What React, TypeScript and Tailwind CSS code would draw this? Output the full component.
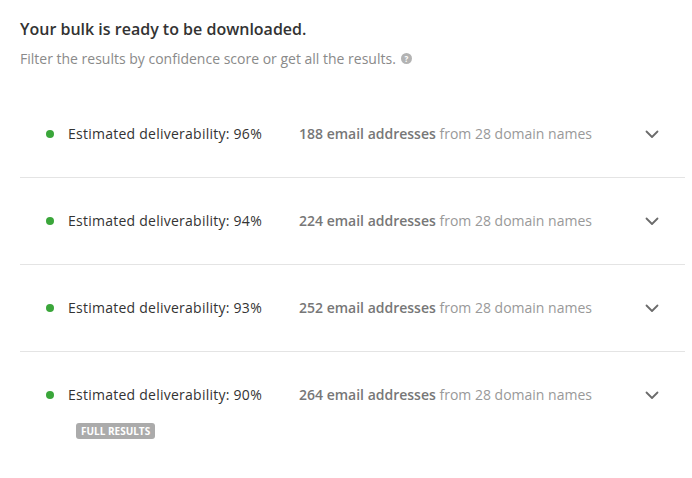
const rows = [
  { score: 96, emails: 188, domains: 28 },
  { score: 94, emails: 224, domains: 28 },
  { score: 93, emails: 252, domains: 28 },
  { score: 90, emails: 264, domains: 28, full: true },
];

function Chevron() {
  return (
    <svg width="14" height="9" viewBox="0 0 14 9" fill="none" className="shrink-0">
      <path d="M1.5 1.5 L7 7 L12.5 1.5" stroke="#6b6b6b" strokeWidth="1.8" strokeLinecap="round" strokeLinejoin="round" />
    </svg>
  );
}

export default function App() {
  return (
    <div
      className="w-[692px] h-[478px] bg-white px-5 pt-[18px]"
      style={{ fontFamily: '"Open Sans", "Liberation Sans", sans-serif' }}
    >
      <h1 className="text-[16px] leading-[22px] font-semibold text-[#333]">
        Your bulk is ready to be downloaded.
      </h1>
      <p className="mt-[9px] flex items-center text-[14px] leading-[19px] text-[#8a8a8a]">
        Filter the results by confidence score or get all the results.
        <span className="ml-[5px] flex h-[11px] w-[11px] items-center justify-center rounded-full bg-[#b3b3b3] text-[8px] font-bold leading-none text-white">
          ?
        </span>
      </p>

      <div className="mt-[23px] w-[665px]">
        {rows.map((r, i) => (
          <div
            key={r.score}
            className={`pl-[26px] pr-[26px] pt-[34px] ${r.full ? "pb-[20px]" : "pb-[34px]"} ${
              i < rows.length - 1 ? "border-b border-[#e4e4e4]" : ""
            }`}
          >
            <div className="flex items-center text-[14px] leading-[18px]">
              <div className="flex w-[253px] shrink-0 items-center">
                <span className="h-2 w-2 shrink-0 rounded-full bg-[#3aa63a]" />
                <span className="ml-[14px] tracking-[0.25px] text-[#333]">
                  Estimated deliverability: {r.score}%
                </span>
              </div>
              <div className="flex-1 text-[#999]">
                <span className="font-semibold text-[#777]">{r.emails} email addresses</span> from{" "}
                {r.domains} domain names
              </div>
              <Chevron />
            </div>
            {r.full && (
              <div className="mt-[19px] ml-[30px] inline-flex h-4 items-center rounded-[3px] bg-[#ababab] px-[5px] text-[10px] font-bold leading-none text-white">
                FULL RESULTS
              </div>
            )}
          </div>
        ))}
      </div>
    </div>
  );
}
